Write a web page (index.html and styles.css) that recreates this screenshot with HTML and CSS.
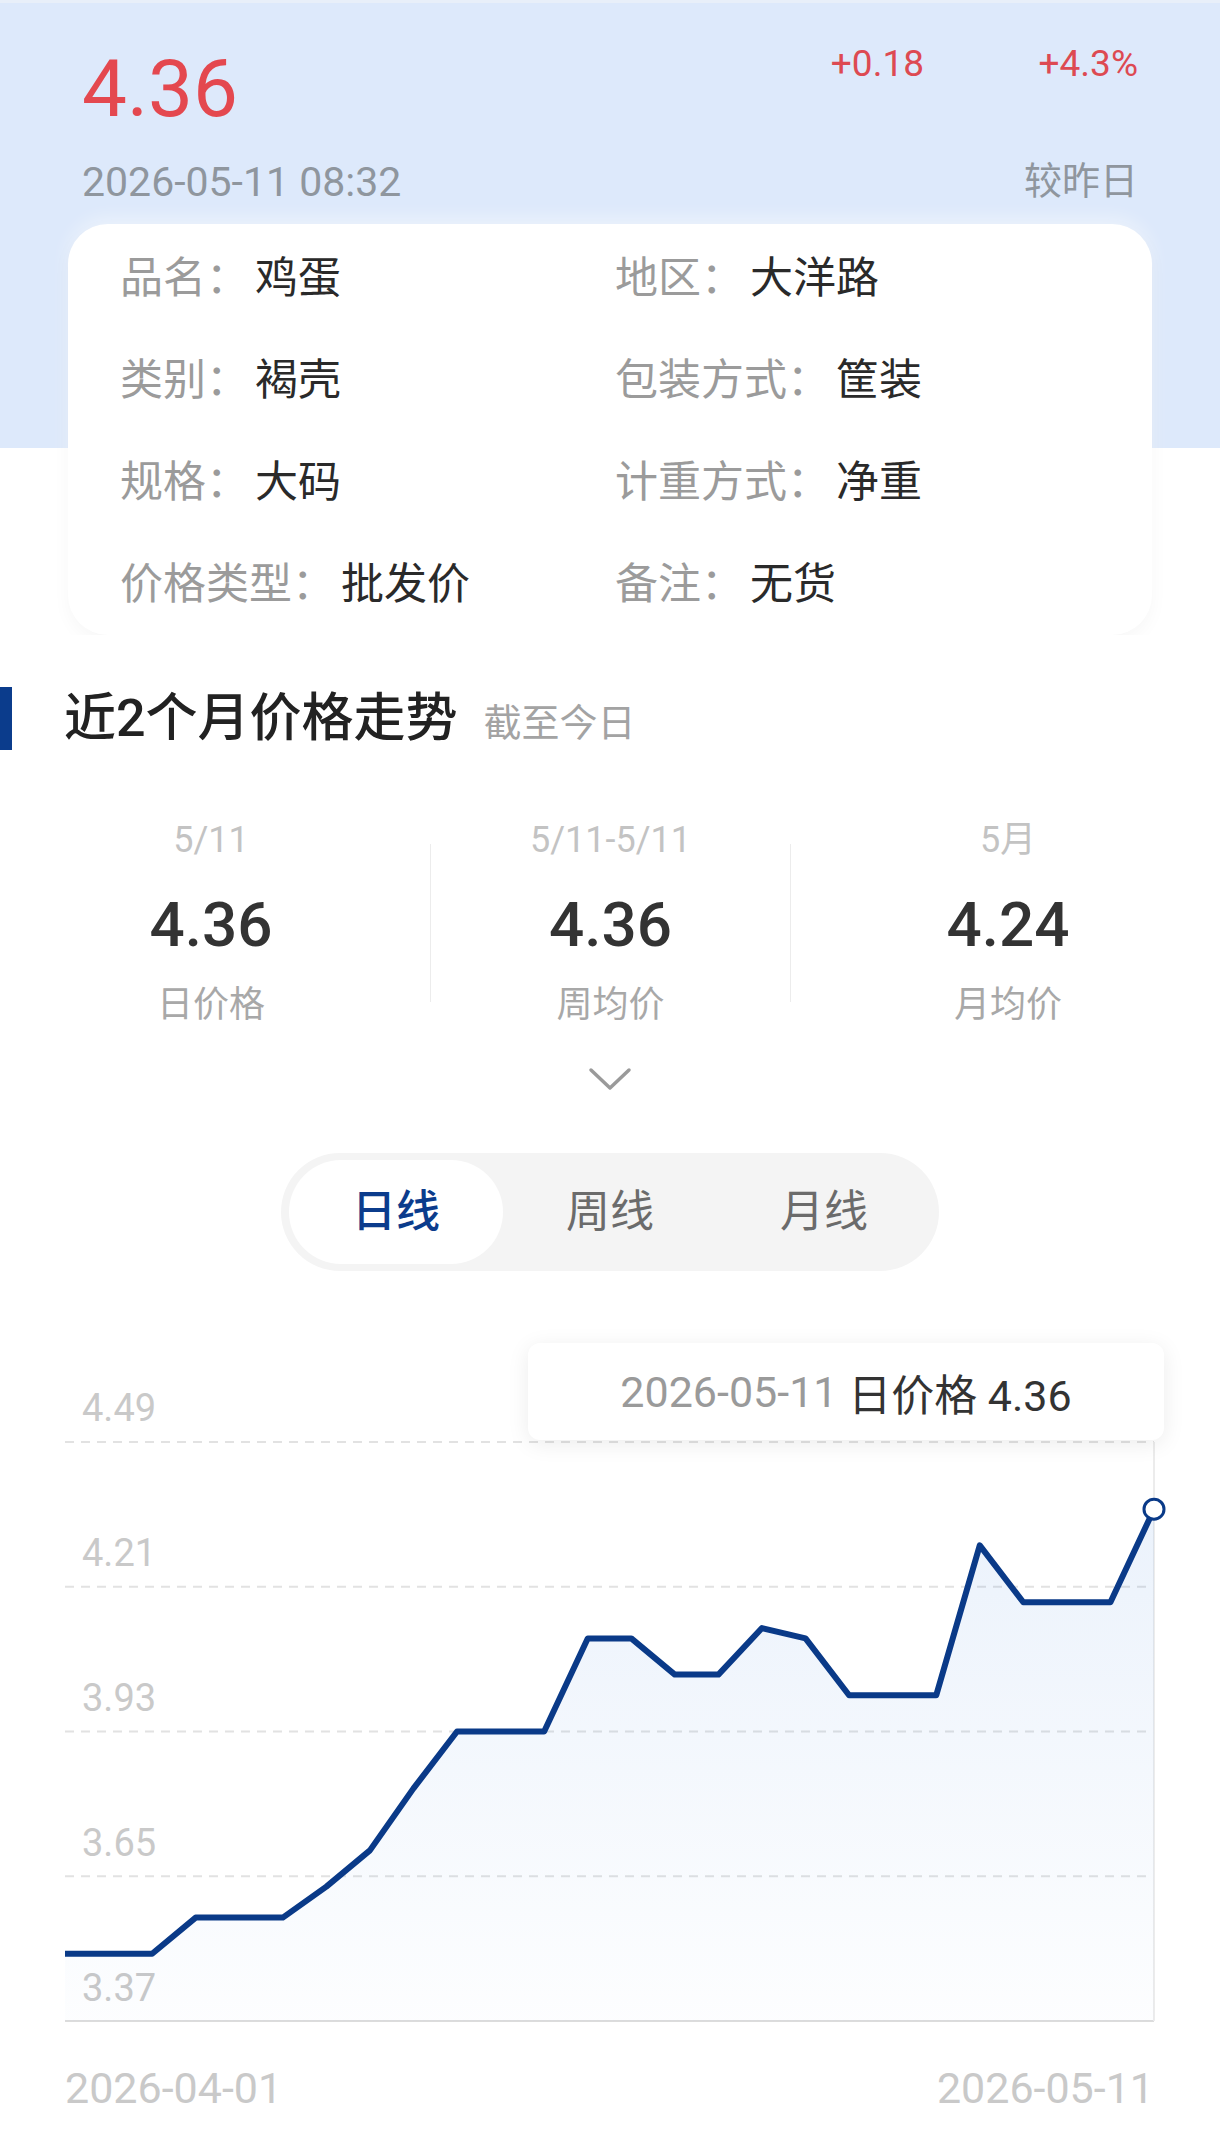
FILE: index.html
```html
<!DOCTYPE html>
<html lang="zh-CN">
<head>
<meta charset="utf-8">
<title>鸡蛋价格</title>
<link rel="stylesheet" href="styles.css">
</head>
<body>
<div class="page">
  <header class="top">
    <div class="summary">
      <div class="summary-main">
        <div class="price">4.36</div>
        <div class="time">2026-05-11 08:32</div>
      </div>
      <div class="summary-change">
        <span class="chg">+0.18</span>
        <span class="chg">+4.3%</span>
        <span class="chg-label">较昨日</span>
      </div>
    </div>
    <section class="info-card">
      <div class="info-item"><span class="info-label">品名：</span><span class="info-value">鸡蛋</span></div>
      <div class="info-item"><span class="info-label">地区：</span><span class="info-value">大洋路</span></div>
      <div class="info-item"><span class="info-label">类别：</span><span class="info-value">褐壳</span></div>
      <div class="info-item"><span class="info-label">包装方式：</span><span class="info-value">筐装</span></div>
      <div class="info-item"><span class="info-label">规格：</span><span class="info-value">大码</span></div>
      <div class="info-item"><span class="info-label">计重方式：</span><span class="info-value">净重</span></div>
      <div class="info-item"><span class="info-label">价格类型：</span><span class="info-value">批发价</span></div>
      <div class="info-item"><span class="info-label">备注：</span><span class="info-value">无货</span></div>
    </section>
  </header>

  <section class="trend">
    <h2 class="trend-title">
      <span class="title-bar"></span>
      <span class="title-texts"><span class="title-text">近2个月价格走势</span><span class="title-sub">截至今日</span></span>
    </h2>

    <div class="stats">
      <div class="stat stat-first">
        <div class="stat-period">5/11</div>
        <div class="stat-value">4.36</div>
        <div class="stat-label">日价格</div>
      </div>
      <div class="stat-divider"></div>
      <div class="stat">
        <div class="stat-period">5/11-5/11</div>
        <div class="stat-value">4.36</div>
        <div class="stat-label">周均价</div>
      </div>
      <div class="stat-divider"></div>
      <div class="stat stat-last">
        <div class="stat-period">5月</div>
        <div class="stat-value">4.24</div>
        <div class="stat-label">月均价</div>
      </div>
    </div>

    <div class="more">
      <svg width="44" height="24" viewBox="0 0 44 24"><path d="M3 3 L22 21 L41 3" fill="none" stroke="#9a9a9a" stroke-width="3.5" stroke-linecap="round" stroke-linejoin="round"/></svg>
    </div>

    <div class="tabs">
      <div class="tab active">日线</div>
      <div class="tab">周线</div>
      <div class="tab">月线</div>
    </div>

    <div class="chart">
      <svg class="chart-svg" width="1220" height="846" viewBox="0 1300 1220 846">
        <defs>
          <linearGradient id="fillGrad" x1="0" y1="1500" x2="0" y2="2021" gradientUnits="userSpaceOnUse">
            <stop offset="0" stop-color="#1e6ed8" stop-opacity="0.09"/>
            <stop offset="1" stop-color="#1e6ed8" stop-opacity="0.01"/>
          </linearGradient>
        </defs>
        <g class="grid">
          <line x1="65" y1="1442" x2="1154" y2="1442"/>
          <line x1="65" y1="1586.75" x2="1154" y2="1586.75"/>
          <line x1="65" y1="1731.5" x2="1154" y2="1731.5"/>
          <line x1="65" y1="1876.25" x2="1154" y2="1876.25"/>
        </g>
        <line class="axis" x1="65" y1="2021" x2="1154" y2="2021"/>
        <line class="pointer" x1="1154" y1="1442" x2="1154" y2="2021"/>
        <text class="ylabel" x="82" y="1421">4.49</text>
        <text class="ylabel" x="82" y="1566">4.21</text>
        <text class="ylabel" x="82" y="1711">3.93</text>
        <text class="ylabel" x="82" y="1856">3.65</text>
        <text class="ylabel" x="82" y="2001">3.37</text>
        <path class="area" d="M65 1953.8 L108.56 1953.8 L152.12 1953.8 L195.68 1917.6 L239.24 1917.6 L282.8 1917.6 L326.36 1886.6 L369.92 1850.4 L413.48 1788.4 L457.04 1731.5 L500.6 1731.5 L544.16 1731.5 L587.72 1638.4 L631.28 1638.4 L674.84 1674.6 L718.4 1674.6 L761.96 1628.1 L805.52 1638.4 L849.08 1695.3 L892.64 1695.3 L936.2 1695.3 L979.76 1545.4 L1023.32 1602.3 L1066.88 1602.3 L1110.44 1602.3 L1154 1509.2 L1154 2021 L65 2021 Z"/>
        <path class="line" d="M65 1953.8 L108.56 1953.8 L152.12 1953.8 L195.68 1917.6 L239.24 1917.6 L282.8 1917.6 L326.36 1886.6 L369.92 1850.4 L413.48 1788.4 L457.04 1731.5 L500.6 1731.5 L544.16 1731.5 L587.72 1638.4 L631.28 1638.4 L674.84 1674.6 L718.4 1674.6 L761.96 1628.1 L805.52 1638.4 L849.08 1695.3 L892.64 1695.3 L936.2 1695.3 L979.76 1545.4 L1023.32 1602.3 L1066.88 1602.3 L1110.44 1602.3 L1154 1509.2"/>
        <circle class="dot" cx="1154" cy="1509.2" r="10"/>
        <text class="xlabel" x="65" y="2103">2026-04-01</text>
        <text class="xlabel" x="1154" y="2103" text-anchor="end">2026-05-11</text>
      </svg>
      <div class="tooltip"><span class="tip-date">2026-05-11</span> 日价格 4.36</div>
    </div>
  </section>
</div>
</body>
</html>
```

FILE: styles.css
```css
* { box-sizing: border-box; }

html, body {
  margin: 0;
  padding: 0;
  background: #ffffff;
}

body {
  font-family: Roboto, "Noto Sans CJK SC", sans-serif;
  color: #333;
}

.page {
  width: 1220px;
  height: 2146px;
  overflow: hidden;
}

.top {
  background: linear-gradient(#e8eff9 0, #e8eff9 3px, #dde9fb 3px, #dde9fb 448px, #ffffff 448px);
  overflow: hidden;
}

.summary {
  display: flex;
  justify-content: space-between;
  align-items: flex-start;
  padding: 0 82px;
}

.price {
  font-size: 80px;
  line-height: 80px;
  margin-top: 49px;
  color: #e4484f;
}

.time {
  font-size: 41px;
  line-height: 48px;
  margin-top: 29px;
  color: #8f969e;
}

.summary-change {
  display: grid;
  grid-template-columns: auto auto;
  column-gap: 100px;
  justify-items: end;
  padding-top: 42px;
}

.chg {
  font-size: 37px;
  line-height: 44px;
  color: #dd4a52;
}

.chg-label {
  grid-column: 2;
  font-size: 38px;
  line-height: 44px;
  margin-top: 73px;
  color: #8f969e;
}

.info-card {
  margin: 18px 68px 0;
  background: #ffffff;
  border-radius: 40px;
  padding: 3px 52px 0;
  display: grid;
  grid-template-columns: 495px 1fr;
  grid-auto-rows: 102px;
  box-shadow: 0 -6px 18px rgba(255, 255, 255, 0.45), 0 6px 18px rgba(0, 0, 0, 0.035);
}

.info-item {
  display: flex;
  align-items: center;
  font-size: 43px;
  line-height: 102px;
  white-space: nowrap;
}

.info-label {
  color: #9b9b9b;
}

.info-value {
  color: #2a2a2a;
  margin-left: 6px;
}

.trend-title {
  margin: 52px 0 0;
  display: flex;
  align-items: center;
  height: 63px;
  font-weight: normal;
}

.title-bar {
  width: 12px;
  height: 63px;
  background: #0b3c8c;
}

.title-texts {
  display: flex;
  align-items: baseline;
  margin-left: 52px;
}

.title-text {
  font-size: 52px;
  line-height: 63px;
  font-weight: 500;
  color: #222;
}

.title-sub {
  font-size: 38px;
  color: #a3a3a3;
  margin-left: 26px;
}

.stats {
  display: grid;
  grid-template-columns: 430px 1px 359px 1px 429px;
  align-items: center;
  margin-top: 66px;
}

.stat {
  display: flex;
  flex-direction: column;
  align-items: center;
}

.stat-first { padding-right: 8px; }
.stat-last { padding-left: 5px; }

.stat-period {
  font-size: 36px;
  line-height: 48px;
  color: #c3c3c3;
}

.stat-value {
  font-size: 62px;
  line-height: 72px;
  margin-top: 25px;
  font-weight: 500;
  color: #333;
}

.stat-label {
  font-size: 36px;
  line-height: 48px;
  margin-top: 20px;
  color: #a8a8a8;
}

.stat-divider {
  height: 158px;
  background: #ececec;
}

.more {
  display: flex;
  justify-content: center;
  margin-top: 38px;
}

.more svg { display: block; }

.tabs {
  width: 658px;
  height: 118px;
  margin: 62px auto 0;
  padding: 7px 8px;
  display: flex;
  background: #f4f4f4;
  border-radius: 59px;
}

.tab {
  width: 214px;
  line-height: 104px;
  text-align: center;
  font-size: 44px;
  color: #6b6b6b;
  border-radius: 52px;
}

.tab.active {
  background: #ffffff;
  color: #0b3c8c;
  font-weight: 500;
}

.chart {
  position: relative;
  height: 846px;
  margin-top: 29px;
}

.chart-svg { display: block; }

.grid line {
  stroke: #e2e2e2;
  stroke-width: 2;
  stroke-dasharray: 9 7;
}

.axis {
  stroke: #dcdcdc;
  stroke-width: 2;
}

.pointer {
  stroke: #ececec;
  stroke-width: 2;
}

.ylabel {
  font-family: Roboto, "Noto Sans CJK SC", sans-serif;
  font-size: 38px;
  fill: #c9c9c9;
}

.xlabel {
  font-family: Roboto, "Noto Sans CJK SC", sans-serif;
  font-size: 43px;
  fill: #c9c9c9;
}

.area {
  fill: url(#fillGrad);
  stroke: none;
}

.line {
  fill: none;
  stroke: #0a3a88;
  stroke-width: 6;
  stroke-linejoin: round;
  stroke-linecap: butt;
}

.dot {
  fill: #ffffff;
  stroke: #0a3a88;
  stroke-width: 3;
}

.tooltip {
  position: absolute;
  left: 528px;
  top: 43px;
  width: 636px;
  height: 97px;
  background: #ffffff;
  border-radius: 12px;
  box-shadow: 0 4px 22px rgba(0, 0, 0, 0.08);
  display: flex;
  align-items: center;
  justify-content: center;
  font-size: 43px;
  color: #333;
  white-space: pre;
}

.tip-date {
  color: #9a9a9a;
}
```
